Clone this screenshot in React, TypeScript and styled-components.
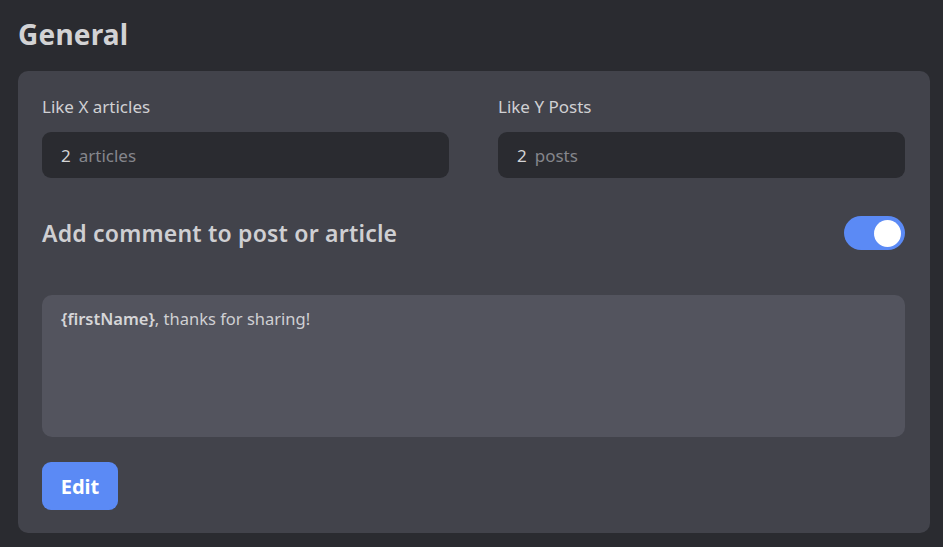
import React from "react";
import styled, { createGlobalStyle } from "styled-components";

const Global = createGlobalStyle`
  html, body { margin: 0; padding: 0; background: #2a2b30; }
  body { font-family: "Noto Sans", Lato, sans-serif; }
  * { box-sizing: border-box; }
`;

const Page = styled.div`
  width: 943px;
  height: 547px;
  padding: 16px 13px 14px 18px;
  display: flex;
  flex-direction: column;
  background: #2a2b30;
`;

const Title = styled.h1`
  margin: 0 0 18px 0;
  font-size: 28px;
  line-height: 37px;
  font-weight: 700;
  letter-spacing: 0.2px;
  color: #d2d2d4;
`;

const Card = styled.div`
  flex: 1;
  background: #42434b;
  border-radius: 10px;
  padding: 24px 25px 23px 24px;
  display: flex;
  flex-direction: column;
`;

const Fields = styled.div`
  display: grid;
  grid-template-columns: 1fr 1fr;
  column-gap: 49px;
`;

const Field = styled.div`
  display: flex;
  flex-direction: column;
`;

const Label = styled.div`
  font-size: 17px;
  line-height: 24px;
  color: #d0d0d3;
  margin-bottom: 13px;
`;

const InputBox = styled.div`
  height: 46px;
  background: #2a2b30;
  border-radius: 9px;
  padding: 0 19px;
  display: flex;
  align-items: center;
  gap: 8px;
  font-size: 17px;
`;

const Num = styled.span`
  color: #d4d4d6;
`;

const Unit = styled.span`
  color: #85868c;
`;

const Row = styled.div`
  margin-top: 38px;
  display: flex;
  align-items: center;
  justify-content: space-between;
  height: 34px;
`;

const Heading = styled.div`
  font-size: 23px;
  font-weight: 600;
  letter-spacing: 0.2px;
  color: #cfcfd2;
`;

const Toggle = styled.div<{ on: boolean }>`
  width: 61px;
  height: 34px;
  border-radius: 17px;
  background: ${(p) => (p.on ? "#5b8af5" : "#6a6b73")};
  display: flex;
  align-items: center;
  justify-content: ${(p) => (p.on ? "flex-end" : "flex-start")};
  padding: 0 4px;
`;

const Knob = styled.div`
  width: 27px;
  height: 27px;
  border-radius: 50%;
  background: #ffffff;
`;

const TextArea = styled.div`
  margin-top: 45px;
  height: 142px;
  background: #53545e;
  border-radius: 10px;
  padding: 12px 19px;
  font-size: 16.5px;
  line-height: 24px;
  color: #d0d0d3;
`;

const Var = styled.b`
  font-weight: 600;
  color: #d6d6d8;
`;

const Button = styled.button`
  margin-top: 25px;
  align-self: flex-start;
  width: 76px;
  height: 48px;
  border: none;
  border-radius: 9px;
  background: #5b8af5;
  color: #ffffff;
  font-family: inherit;
  font-size: 20px;
  font-weight: 700;
  cursor: pointer;
`;

export default function App() {
  return (
    <>
      <Global />
      <Page>
        <Title>General</Title>
        <Card>
          <Fields>
            <Field>
              <Label>Like X articles</Label>
              <InputBox>
                <Num>2</Num>
                <Unit>articles</Unit>
              </InputBox>
            </Field>
            <Field>
              <Label>Like Y Posts</Label>
              <InputBox>
                <Num>2</Num>
                <Unit>posts</Unit>
              </InputBox>
            </Field>
          </Fields>
          <Row>
            <Heading>Add comment to post or article</Heading>
            <Toggle on={true}>
              <Knob />
            </Toggle>
          </Row>
          <TextArea>
            <Var>{"{firstName}"}</Var>, thanks for sharing!
          </TextArea>
          <Button>Edit</Button>
        </Card>
      </Page>
    </>
  );
}
